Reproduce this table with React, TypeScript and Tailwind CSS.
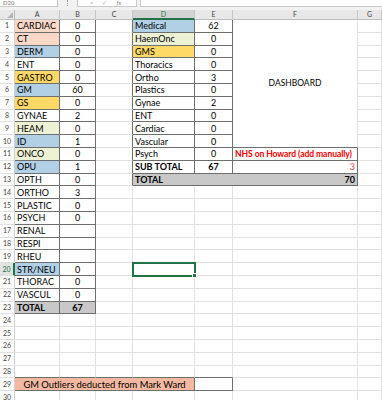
type Cell = {
  t?: string
  t2?: string
  fill?: string
  bold?: boolean
  align?: 'l' | 'c' | 'r' | 'between'
  color?: string
  size?: string
  span?: number
  rows?: number
  tbl?: boolean
  skip?: boolean
}

const COLS = ['A', 'B', 'C', 'D', 'E', 'F', 'G']

const FILL: Record<string, string> = {
  salmon: 'bg-[#fad9c9]',
  blue: 'bg-[#b2d0e5]',
  gold: 'bg-[#ffd966]',
  green: 'bg-[#eef2d5]',
  gray: 'bg-[#c8c8c8]',
  peach: 'bg-[#f5b9a1]',
}

const LEFT: [string, string, string][] = [
  ['CARDIAC', 'salmon', '0'],
  ['CT', 'salmon', '0'],
  ['DERM', 'blue', '0'],
  ['ENT', '', '0'],
  ['GASTRO', 'gold', '0'],
  ['GM', 'blue', '60'],
  ['GS', 'gold', '0'],
  ['GYNAE', '', '2'],
  ['HEAM', 'green', '0'],
  ['ID', 'blue', '1'],
  ['ONCO', 'green', '0'],
  ['OPU', 'blue', '1'],
  ['OPTH', '', '0'],
  ['ORTHO', '', '3'],
  ['PLASTIC', '', '0'],
  ['PSYCH', '', '0'],
  ['RENAL', '', ''],
  ['RESPI', '', ''],
  ['RHEU', '', ''],
  ['STR/NEU', 'blue', '0'],
  ['THORAC', '', '0'],
  ['VASCUL', '', '0'],
]

const RIGHT: [string, string, string][] = [
  ['Medical', 'blue', '62'],
  ['HaemOnc', 'green', '0'],
  ['GMS', 'gold', '0'],
  ['Thoracics', '', '0'],
  ['Ortho', '', '3'],
  ['Plastics', '', '0'],
  ['Gynae', '', '2'],
  ['ENT', '', '0'],
  ['Cardiac', '', '0'],
  ['Vascular', '', '0'],
  ['Psych', '', '0'],
]

function buildGrid() {
  const g: Cell[][] = Array.from({ length: 30 }, () => COLS.map(() => ({})))
  LEFT.forEach(([name, fill, val], i) => {
    g[i][0] = { t: name, fill, tbl: true }
    g[i][1] = { t: val, align: 'c', tbl: true }
  })
  g[22][0] = { t: 'TOTAL', fill: 'gray', bold: true, tbl: true }
  g[22][1] = { t: '67', fill: 'gray', bold: true, align: 'c', tbl: true }

  RIGHT.forEach(([name, fill, val], i) => {
    g[i][3] = { t: name, fill, tbl: true }
    g[i][4] = { t: val, align: 'c', tbl: true }
  })
  g[11][3] = { t: 'SUB TOTAL', bold: true, tbl: true }
  g[11][4] = { t: '67', bold: true, align: 'c', tbl: true }
  g[10][5] = {
    t: 'NHS on Howard (add manually)',
    bold: true,
    color: 'text-[#ff0000]',
    size: 'text-[8.6px] tracking-[-0.1px]',
    tbl: true,
  }
  g[11][5] = { t: '3', align: 'r', color: 'text-[#ff3c3c]', tbl: true }
  g[12][3] = { t: 'TOTAL', t2: '70', fill: 'gray', bold: true, align: 'between', span: 3, tbl: true }
  g[12][4] = { skip: true, tbl: true }
  g[12][5] = { skip: true, tbl: true }

  // merged dashboard cell F1:F10
  g[0][5] = { t: 'DASHBOARD', align: 'c', rows: 10, size: 'text-[8.5px]' }
  for (let r = 1; r < 10; r++) g[r][5] = { skip: true }

  g[28][0] = {
    t: 'GM Outliers deducted from Mark Ward',
    fill: 'peach',
    align: 'c',
    span: 4,
    size: 'text-[9.4px]',
    tbl: true,
  }
  g[28][1] = { skip: true, tbl: true }
  g[28][2] = { skip: true, tbl: true }
  g[28][3] = { skip: true, tbl: true }
  g[28][4] = { tbl: true }
  return g
}

const GRID = buildGrid()

const inTbl = (r: number, c: number) => r < 30 && c < 7 && !!GRID[r][c].tbl

const SPAN: Record<number, string> = { 1: '', 3: 'col-span-3', 4: 'col-span-4' }

function FormulaBar() {
  return (
    <div className="h-[10px] bg-[#f1f1f1] flex items-start overflow-hidden">
      <div className="w-[58px] h-[7px] bg-white border-r border-b border-[#c8c8c8] overflow-hidden">
        <div className="pl-[3px] text-[6px] leading-[6px] text-[#777]">D20</div>
      </div>
      <div className="w-[19px] flex justify-center">
        <div className="w-px h-[6px] border-l border-dotted border-[#999]" />
      </div>
      <div className="w-[60px] h-[7px] bg-white border-x border-b border-[#c8c8c8] overflow-hidden flex gap-[9px] pl-[12px]">
        <span className="text-[6px] leading-[6px] text-[#aaa]">×</span>
        <span className="text-[6px] leading-[6px] text-[#aaa]">✓</span>
        <span className="text-[6px] leading-[6px] italic text-[#888]">fx</span>
      </div>
      <div className="ml-[3px] flex-1 h-[7px] bg-white border-l border-b border-[#c8c8c8]" />
    </div>
  )
}

function ColHeader({ label, active }: { label: string; active?: boolean }) {
  return (
    <div
      className={`flex items-center justify-center text-[7px] leading-none border-r border-[#c6c6c6] ${
        active
          ? 'bg-[#d3d3d3] text-[#217346] border-b-2 border-b-[#217346]'
          : 'bg-[#e8e8e8] text-[#444] border-b border-b-[#bdbdbd]'
      }`}
    >
      {label}
    </div>
  )
}

function RowHeader({ n }: { n: number }) {
  const active = n === 20
  return (
    <div
      className={`flex items-center justify-center text-[7px] leading-none border-b border-b-[#e1e1e1] ${
        active
          ? 'bg-[#e1e1e1] text-[#217346] border-r-2 border-r-[#217346]'
          : 'bg-white text-[#444] border-r border-r-[#d0d0d0]'
      }`}
    >
      {n}
    </div>
  )
}

function GridCell({ cell, r, c }: { cell: Cell; r: number; c: number }) {
  const span = cell.span ?? 1
  const rows = cell.rows ?? 1
  const darkR = inTbl(r, c) || inTbl(r, c + span)
  const darkB = inTbl(r, c) || inTbl(r + rows, c)
  const selected = r === 19 && c === 3
  const align =
    cell.align === 'c'
      ? 'justify-center'
      : cell.align === 'r'
        ? 'justify-end'
        : cell.align === 'between'
          ? 'justify-between'
          : 'justify-start'

  return (
    <div
      className={`flex items-center px-[2px] whitespace-nowrap overflow-hidden leading-none border-r border-b ${
        cell.size ?? 'text-[9px]'
      } ${darkR ? 'border-r-[#6e6e6e]' : 'border-r-[#e1e1e1]'} ${
        darkB ? 'border-b-[#6e6e6e]' : 'border-b-[#e1e1e1]'
      } ${SPAN[span]} ${rows === 10 ? 'row-span-10' : ''} ${
        cell.fill ? FILL[cell.fill] : 'bg-white'
      } ${cell.bold ? 'font-bold' : ''} ${cell.color ?? 'text-black'} ${align} ${
        selected ? 'relative z-10 overflow-visible outline-2 outline-[#217346] -outline-offset-1' : ''
      }`}
    >
      {cell.t && <span>{cell.t}</span>}
      {cell.t2 && <span>{cell.t2}</span>}
      {selected && (
        <span className="absolute -right-[3px] -bottom-[3px] w-[5px] h-[5px] bg-[#217346] border border-white" />
      )}
    </div>
  )
}

export default function App() {
  return (
    <div className="w-[382px] h-[400px] overflow-hidden bg-white font-[family-name:Lato,sans-serif]">
      <FormulaBar />
      <div className="grid grid-cols-[15px_45px_36px_37px_62px_38px_125px_24px] grid-rows-[10px_repeat(30,12.8px)]">
        {/* corner */}
        <div className="relative bg-[#e8e8e8] border-r border-b border-[#bdbdbd]">
          <svg className="absolute right-[1px] bottom-[1px]" width="6" height="6" viewBox="0 0 6 6">
            <path d="M6 0V6H0Z" fill="#b5b5b5" />
          </svg>
        </div>
        {COLS.map((l) => (
          <ColHeader key={l} label={l} active={l === 'D'} />
        ))}

        {GRID.map((row, r) => [
          <RowHeader key={`h${r}`} n={r + 1} />,
          ...row.map((cell, c) =>
            cell.skip ? null : <GridCell key={`${r}-${c}`} cell={cell} r={r} c={c} />,
          ),
        ])}
      </div>
    </div>
  )
}
